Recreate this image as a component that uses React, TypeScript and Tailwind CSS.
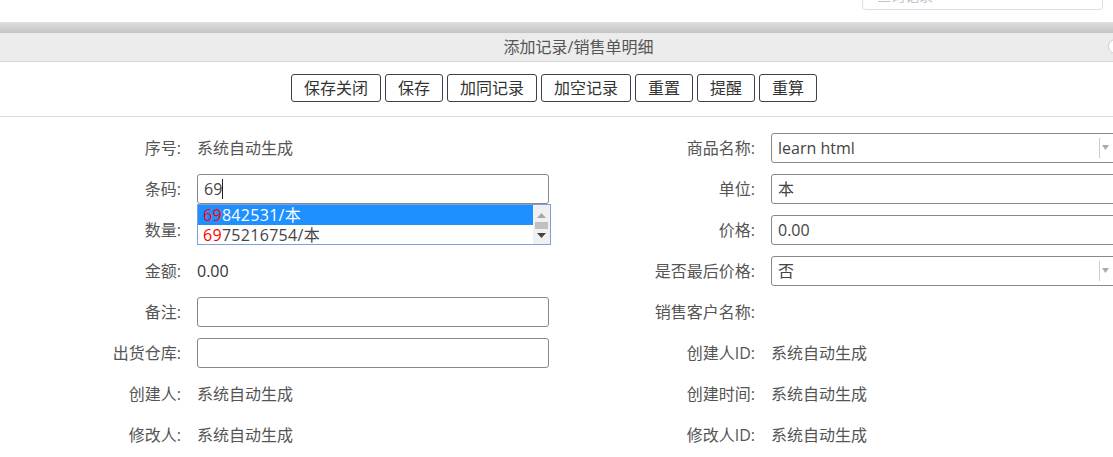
const pageFont = { fontFamily: '"Open Sans", "Noto Sans CJK SC", sans-serif' }

function Label({ text }: { text: string }) {
  return <div className="w-[181px] shrink-0 text-right text-[#555]">{text}:</div>
}

function TextInput({ value, caret }: { value?: string; caret?: boolean }) {
  return (
    <div className="ml-[16px] flex h-[30px] w-[352px] shrink-0 items-center rounded-[3px] border border-[#888] bg-white px-[6px] text-[#444]">
      {value}
      {caret && <span className="h-[20px] w-px bg-[#222]" />}
    </div>
  )
}

function Combo({ value }: { value: string }) {
  return (
    <div className="ml-[16px] flex h-[30px] w-[352px] shrink-0 items-center rounded-[3px] border border-[#888] bg-white pl-[6px] text-[#444]">
      <span className="flex-1">{value}</span>
      <span className="mr-[13px] flex h-[20px] w-[10px] items-center justify-end border-l border-[#ccc]">
        <svg width="7" height="5" viewBox="0 0 7 5">
          <path d="M0 0h7L3.5 5z" fill="#aaa" />
        </svg>
      </span>
    </div>
  )
}

function Plain({ value, dark }: { value: string; dark?: boolean }) {
  return <div className={`ml-[16px] ${dark ? 'text-[#333]' : 'text-[#555]'}`}>{value}</div>
}

function Dropdown() {
  return (
    <div className="absolute left-[197px] top-[204px] flex h-[41px] w-[354px] border border-[#7f9fdb] bg-white text-[#444]">
      <div className="flex-1 tracking-[0.3px]">
        <div className="h-[20px] bg-[#1e90ff] pl-[5px] leading-[20px] text-white">
          <span className="text-[#ff0000]">69</span>842531/本
        </div>
        <div className="h-[20px] pl-[5px] leading-[20px]">
          <span className="text-[#ff0000]">69</span>75216754/本
        </div>
      </div>
      <div className="flex w-[17px] flex-col items-center bg-[#f0f0f0] pt-[8px]">
        <svg width="9" height="5" viewBox="0 0 9 5">
          <path d="M4.5 0L9 5H0z" fill="#a8a8a8" />
        </svg>
        <div className="mt-[4px] h-[7px] w-[13px] bg-[#c0c0c0]" />
        <svg className="mt-[4px]" width="9" height="5" viewBox="0 0 9 5">
          <path d="M0 0h9L4.5 5z" fill="#444" />
        </svg>
      </div>
    </div>
  )
}

const buttons = ['保存关闭', '保存', '加同记录', '加空记录', '重置', '提醒', '重算']

function Row({ left, right }: { left: React.ReactNode; right: React.ReactNode }) {
  return (
    <div className="flex h-[41px] items-center">
      <div className="flex w-[574px] shrink-0 items-center">{left}</div>
      {right}
    </div>
  )
}

export default function App() {
  return (
    <div className="relative h-[457px] w-[1113px] overflow-hidden bg-white text-[16px]" style={pageFont}>
      <div className="flex h-[22px] items-start">
        <div className="ml-[862px] mt-[-20px] flex h-[30px] w-[241px] shrink-0 items-center rounded-[4px] border border-[#dcdfe6] pl-[14px] text-[14px] text-[#c0c4cc]">
          查询记录
        </div>
      </div>
      <div className="h-[11px] bg-gradient-to-b from-[#dedede] to-[#c4c4c4]" />
      <div className="relative flex h-[29px] items-center justify-center border-b border-[#d8d8d8] bg-[#ececec] pl-[44px] text-[#555]">
        添加记录/销售单明细
        <span className="absolute left-[1108px] top-[6px] h-[15px] w-[15px] rounded-full border border-[#ccc] bg-white" />
      </div>
      <div className="flex h-[55px] items-center justify-center gap-[4px] border-b border-[#ddd] pb-[3px] pr-[5px]">
        {buttons.map((b) => (
          <button key={b} className="h-[28px] rounded-[3px] border border-[#3f3f4f] bg-white px-[12px] text-[#333]">
            {b}
          </button>
        ))}
      </div>
      <div className="pt-[10px]">
        <Row
          left={<><Label text="序号" /><Plain value="系统自动生成" /></>}
          right={<><Label text="商品名称" /><Combo value="learn html" /></>}
        />
        <Row
          left={<><Label text="条码" /><TextInput value="69" caret /></>}
          right={<><Label text="单位" /><TextInput value="本" /></>}
        />
        <Row
          left={<><Label text="数量" /><TextInput /></>}
          right={<><Label text="价格" /><TextInput value="0.00" /></>}
        />
        <Row
          left={<><Label text="金额" /><Plain dark value="0.00" /></>}
          right={<><Label text="是否最后价格" /><Combo value="否" /></>}
        />
        <Row
          left={<><Label text="备注" /><TextInput /></>}
          right={<Label text="销售客户名称" />}
        />
        <Row
          left={<><Label text="出货仓库" /><TextInput /></>}
          right={<><Label text="创建人ID" /><Plain value="系统自动生成" /></>}
        />
        <Row
          left={<><Label text="创建人" /><Plain value="系统自动生成" /></>}
          right={<><Label text="创建时间" /><Plain value="系统自动生成" /></>}
        />
        <Row
          left={<><Label text="修改人" /><Plain value="系统自动生成" /></>}
          right={<><Label text="修改人ID" /><Plain value="系统自动生成" /></>}
        />
      </div>
      <Dropdown />
    </div>
  )
}
